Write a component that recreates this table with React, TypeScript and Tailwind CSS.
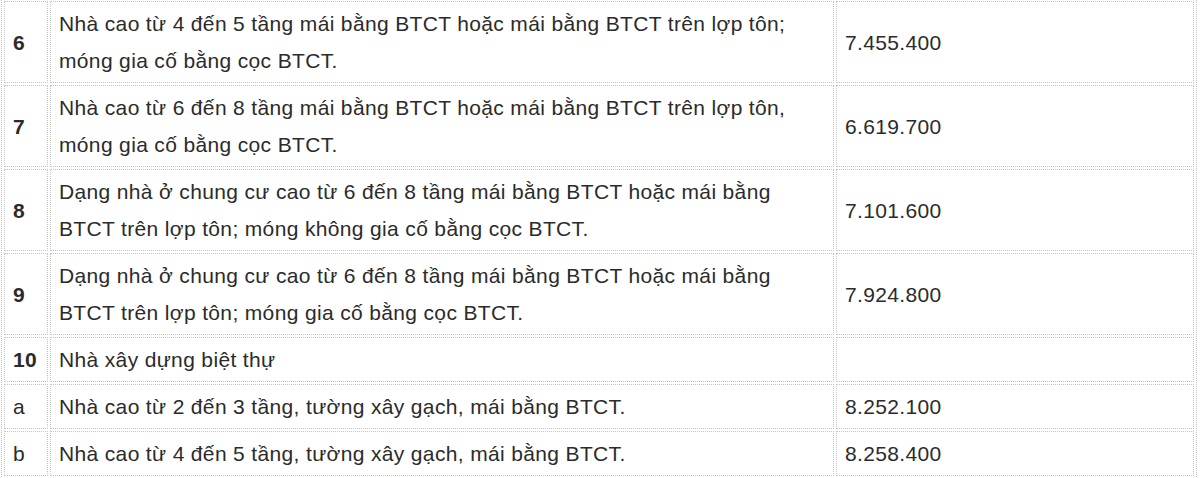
type Row = {
  no: string;
  bold?: boolean;
  text: string[];
  price: string;
};

const rows: Row[] = [
  {
    no: "6",
    bold: true,
    text: [
      "Nhà cao từ 4 đến 5 tầng mái bằng BTCT hoặc mái bằng BTCT trên lợp tôn;",
      "móng gia cố bằng cọc BTCT.",
    ],
    price: "7.455.400",
  },
  {
    no: "7",
    bold: true,
    text: [
      "Nhà cao từ 6 đến 8 tầng mái bằng BTCT hoặc mái bằng BTCT trên lợp tôn,",
      "móng gia cố bằng cọc BTCT.",
    ],
    price: "6.619.700",
  },
  {
    no: "8",
    bold: true,
    text: [
      "Dạng nhà ở chung cư cao từ 6 đến 8 tầng mái bằng BTCT hoặc mái bằng",
      "BTCT trên lợp tôn; móng không gia cố bằng cọc BTCT.",
    ],
    price: "7.101.600",
  },
  {
    no: "9",
    bold: true,
    text: [
      "Dạng nhà ở chung cư cao từ 6 đến 8 tầng mái bằng BTCT hoặc mái bằng",
      "BTCT trên lợp tôn; móng gia cố bằng cọc BTCT.",
    ],
    price: "7.924.800",
  },
  { no: "10", bold: true, text: ["Nhà xây dựng biệt thự"], price: "" },
  {
    no: "a",
    text: ["Nhà cao từ 2 đến 3 tầng, tường xây gạch, mái bằng BTCT."],
    price: "8.252.100",
  },
  {
    no: "b",
    text: ["Nhà cao từ 4 đến 5 tầng, tường xây gạch, mái bằng BTCT."],
    price: "8.258.400",
  },
];

const cell = "border border-dotted border-[#c4c4c4] px-2 py-[3px] align-middle";

export default function App() {
  return (
    <div className="w-[1200px] h-[478px] overflow-hidden bg-white">
      <table
        className="ml-px -mt-[2px] w-[1196px] table-fixed border-separate border-spacing-[2px] border border-dotted border-[#c4c4c4] text-[21px] leading-[37px] tracking-[0.35px] text-[#2b2b2b]"
        style={{ fontFamily: '"Liberation Sans", Arial, sans-serif' }}
      >
        <colgroup>
          <col className="w-[44px]" />
          <col className="w-[784px]" />
          <col className="w-[358px]" />
        </colgroup>
        <tbody>
          {rows.map((r) => (
            <tr key={r.no}>
              <td className={`${cell} ${r.bold ? "font-bold" : ""}`}>{r.no}</td>
              <td className={cell}>
                {r.text.map((line, i) => (
                  <div key={i}>{line}</div>
                ))}
              </td>
              <td className={cell}>{r.price}</td>
            </tr>
          ))}
        </tbody>
      </table>
    </div>
  );
}
